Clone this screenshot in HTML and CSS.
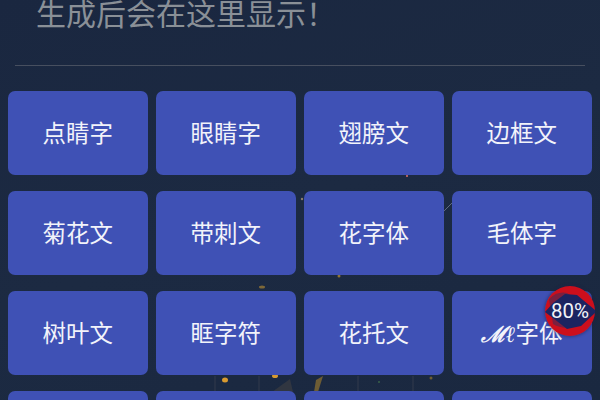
FILE: index.html
```html
<!DOCTYPE html>
<html lang="zh-CN">
<head>
<meta charset="utf-8">
<title>字体</title>
<link rel="stylesheet" href="styles.css">
</head>
<body>
<div class="screen">
  <svg class="lights" viewBox="0 0 600 400" aria-hidden="true">
    <g class="glow">
      <ellipse cx="262" cy="287" rx="3" ry="1.5" fill="#7d6838"/>
      <ellipse cx="339" cy="276" rx="1.5" ry="1.5" fill="#8f7436"/>
      <circle cx="302" cy="199" r="1.2" fill="#8a7c6c"/>
      <circle cx="407" cy="176" r="1" fill="#e0706a"/>
      <ellipse cx="225" cy="380" rx="3" ry="2.5" fill="#d89a30"/>
      <ellipse cx="275" cy="376" rx="3" ry="2" fill="#d89a30"/>
      <path d="M272 392 L290 379 L293 392 Z" fill="#3a3c42" opacity=".7"/>
      <path d="M314 392 L316 380 L323 376 L318 392 Z" fill="#6d5c34"/>
      <path d="M444 211 L452 203" stroke="#5f6a80" stroke-width="1"/>
      <circle cx="379" cy="382" r=".8" fill="#4f8a4f"/>
      <circle cx="431" cy="378" r="1.5" fill="#6d5c34"/>
      <path d="M215 376 V392 M259 376 V392 M358 376 V392 M413 376 V392" stroke="#333b4c" stroke-width="1"/>
    </g>
  </svg>
  <header class="preview"><p class="hint">生成后会在这里显示！</p></header>
  <hr class="rule">
  <main class="grid">
    <button class="tile">点睛字</button>
    <button class="tile">眼睛字</button>
    <button class="tile">翅膀文</button>
    <button class="tile">边框文</button>
    <button class="tile">菊花文</button>
    <button class="tile">带刺文</button>
    <button class="tile">花字体</button>
    <button class="tile">毛体字</button>
    <button class="tile">树叶文</button>
    <button class="tile">眶字符</button>
    <button class="tile">花托文</button>
    <button class="tile"><span class="script">ℳℓ</span>字体</button>
    <button class="tile"></button>
    <button class="tile"></button>
    <button class="tile"></button>
    <button class="tile"></button>
  </main>
  <div class="badge">
    <svg class="badge-art" viewBox="0 0 50 50" aria-hidden="true">
      <circle cx="25" cy="25" r="25" fill="#cc0f1c"/>
      <path d="M4 13 Q12 5 22 7 L42 21 L33 39 Q20 45 8 38 Z" fill="#7c1f3e"/>
      <path d="M0 26 L8 17 L20 8 L32 9 L50 24 V27 L36 40 L22 43 L8 32 Z" fill="#1c2460"/>
    </svg>
    <span class="badge-text">80%</span>
  </div>
</div>
</body>
</html>
```
FILE: styles.css
```css
* { box-sizing: border-box; }
html, body { margin: 0; padding: 0; }
body { width: 600px; height: 400px; overflow: hidden; background: #1b2840; }
.screen {
  position: relative;
  width: 600px;
  height: 400px;
  overflow: hidden;
  background: linear-gradient(160deg, #1a2740 0%, #1c2a42 50%, #1a2840 100%);
  font-family: "Noto Sans CJK SC", "Noto Sans", sans-serif;
}
.lights { position: absolute; inset: 0; width: 600px; height: 400px; }
.glow { filter: blur(.6px); }
.preview { position: relative; display: flex; height: 65px; padding-left: 36px; }
.hint { margin: -3px 0 0; font-size: 30px; line-height: 30px; color: #8a9097; }
.rule { position: relative; height: 1px; margin: 0 15px; border: 0; background: #474f5f; }
.grid {
  position: relative;
  display: grid;
  grid-template-columns: repeat(4, 139.5px);
  grid-auto-rows: 83.5px;
  column-gap: 8.5px;
  row-gap: 16.5px;
  padding: 25px 0 0 8px;
}
.tile {
  padding: 0;
  border: 0;
  border-radius: 7px;
  background: #3f51b5;
  color: #f2f3fa;
  font: inherit;
  font-size: 23.5px;
  line-height: 1;
}
.script { font-family: "DejaVu Serif", serif; font-style: italic; font-weight: 700; font-size: 22px; }
.badge {
  position: absolute;
  left: 545px;
  top: 286px;
  width: 50px;
  height: 50px;
  display: flex;
  align-items: center;
  justify-content: center;
  border-radius: 50%;
  box-shadow: 0 0 3px 1px rgba(30, 30, 70, .45);
}
.badge-art { position: absolute; inset: 0; width: 50px; height: 50px; }
.badge-text { position: relative; color: #f2f3f8; font-family: Roboto, sans-serif; font-size: 20.5px; font-weight: 400; }
```
